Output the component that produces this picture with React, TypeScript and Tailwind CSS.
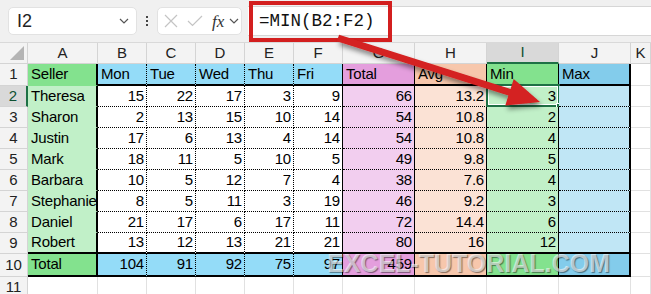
import React from "react";

const widths = ["w-[28px]", "w-[70px]", "w-[49px]", "w-[49px]", "w-[49px]", "w-[49px]", "w-[49px]", "w-[72px]", "w-[72px]", "w-[72px]", "w-[72px]", "w-[20px]"];
const letters = ["A", "B", "C", "D", "E", "F", "G", "H", "I", "J", "K"];

const headerFill = ["bg-[#83e28e]", "bg-[#94dcf8]", "bg-[#94dcf8]", "bg-[#94dcf8]", "bg-[#94dcf8]", "bg-[#94dcf8]", "bg-[#e49edd]", "bg-[#f7c7ac]", "bg-[#83e28e]", "bg-[#83cceb]", "bg-white"];
const dataFill = ["bg-[#c1f0c8]", "bg-white", "bg-white", "bg-white", "bg-white", "bg-white", "bg-[#f2ceef]", "bg-[#fbe2d5]", "bg-[#c1f0c8]", "bg-[#c0e6f5]", "bg-white"];

const rows: (string | number)[][] = [
    ["Seller", "Mon", "Tue", "Wed", "Thu", "Fri", "Total", "Avg", "Min", "Max"],
    ["Theresa", 15, 22, 17, 3, 9, 66, 13.2, 3, ""],
    ["Sharon", 2, 13, 15, 10, 14, 54, 10.8, 2, ""],
    ["Justin", 17, 6, 13, 4, 14, 54, 10.8, 4, ""],
    ["Mark", 18, 11, 5, 10, 5, 49, 9.8, 5, ""],
    ["Barbara", 10, 5, 12, 7, 4, 38, 7.6, 4, ""],
    ["Stephanie", 8, 5, 11, 3, 19, 46, 9.2, 3, ""],
    ["Daniel", 21, 17, 6, 17, 11, 72, 14.4, 6, ""],
    ["Robert", 13, 12, 13, 21, 21, 80, 16, 12, ""],
    ["Total", 104, 91, 92, 75, 97, 459, "", "", ""],
    ["", "", "", "", "", "", "", "", "", ""],
];

const rowHeights = ["h-[22px]", "h-[21px]", "h-[21px]", "h-[21px]", "h-[21px]", "h-[21px]", "h-[21px]", "h-[21px]", "h-[21px]", "h-[23px]", "h-[21px]"];

// r: 1..11, c: 0..10 (A..K)
function rightBorder(r: number, c: number) {
    if (r === 11 || c === 10) return "border-r border-r-[#e1e1e1]";
    if (c === 0 || c === 9) return "border-r-2 border-r-black";
    if (c >= 1 && c <= 4) return "border-r border-r-black [border-right-style:dotted]";
    return "border-r border-r-black";
}

function bottomBorder(r: number, c: number) {
    if (r === 11 || c === 10) return "border-b border-b-[#e1e1e1]";
    if (r === 9 || r === 10) return "border-b-2 border-b-black";
    if (c === 0) return "border-b border-b-transparent";
    if (r === 1) return "border-b-2 border-b-black";
    return "border-b border-b-black [border-bottom-style:dotted]";
}

function fill(r: number, c: number) {
    if (r === 11) return "bg-white";
    if (r === 1 || r === 10) return headerFill[c];
    return dataFill[c];
}

const Chevron = ({ className }: { className?: string }) => (
    <svg width="10" height="6" viewBox="0 0 10 6" className={className}>
        <path d="M1 1L5 5L9 1" stroke="#555" strokeWidth="1.2" fill="none" />
    </svg>
);

export default function App() {
    return (
        <div className="relative w-[651px] h-[294px] overflow-hidden bg-white font-['Liberation_Sans',sans-serif] text-[#111]">
            {/* formula bar */}
            <div className="flex items-center h-[43px] bg-[#f0f0f0] border-b border-[#d9d9d9]">
                <div className="ml-[8px] w-[129px] h-[28px] bg-white rounded-[5px] border border-[#e2e2e2] flex items-center justify-between pl-[8px] pr-[7px]">
                    <span className="text-[18px] text-[#222]">I2</span>
                    <Chevron />
                </div>
                <div className="ml-[9px] flex flex-col gap-[2px]">
                    <span className="w-[2px] h-[2px] bg-[#444]" />
                    <span className="w-[2px] h-[2px] bg-[#444]" />
                    <span className="w-[2px] h-[2px] bg-[#444]" />
                </div>
                <div className="ml-[9px] w-[85px] h-[28px] bg-white rounded-[5px] border border-[#e2e2e2] flex items-center pl-[6px]">
                    <svg width="14" height="14" viewBox="0 0 14 14">
                        <path d="M1 1L13 13M13 1L1 13" stroke="#c4c4c4" strokeWidth="1.2" />
                    </svg>
                    <svg width="16" height="12" viewBox="0 0 16 12" className="ml-[9px]">
                        <path d="M1 6L5.5 10.5L15 1" stroke="#c4c4c4" strokeWidth="1.2" fill="none" />
                    </svg>
                    <span className="ml-[9px] font-['Liberation_Serif',serif] italic text-[17px] text-[#333] leading-none">fx</span>
                    <Chevron className="ml-[5px]" />
                </div>
                <div className="ml-[6px] flex-1 h-[30px] bg-white border-y border-[#d6d6d6] flex items-center pl-[11px]">
                    <span className="font-['Liberation_Mono',monospace] text-[17.5px] text-[#111]">=MIN(B2:F2)</span>
                </div>
            </div>

            {/* column headers */}
            <div className="flex h-[21px]">
                <div className="w-[28px] bg-[#f3f3f3] border-r border-b border-[#d4d4d4] relative">
                    <svg width="14" height="14" viewBox="0 0 14 14" className="absolute right-[3px] bottom-[3px]">
                        <polygon points="14,0 14,14 0,14" fill="#b4b4b4" />
                    </svg>
                </div>
                {letters.map((l, i) => (
                    <div
                        key={l}
                        className={`${widths[i + 1]} flex items-center justify-center text-[15px] border-r border-r-[#d4d4d4] ${i === 8 ? "bg-[#d9d9d9] border-b-2 border-b-[#1e7145] text-[#0f5132]" : "bg-[#f3f3f3] border-b border-b-[#d4d4d4] text-[#222]"}`}
                    >
                        {l}
                    </div>
                ))}
            </div>

            {/* sheet rows */}
            {rows.map((row, ri) => {
                const r = ri + 1;
                return (
                    <div key={r} className={`flex ${rowHeights[ri]}`}>
                        <div
                            className={`w-[28px] flex items-center justify-center text-[15px] border-b border-b-[#d4d4d4] ${r === 2 ? "bg-[#d9d9d9] border-r-2 border-r-[#1e7145] text-[#0f5132]" : "bg-[#f3f3f3] border-r border-r-[#d4d4d4] text-[#222]"}`}
                        >
                            {r}
                        </div>
                        {letters.map((l, c) => {
                            const v = c < 10 ? row[c] : "";
                            const isNum = typeof v === "number";
                            return (
                                <div
                                    key={l}
                                    className={`relative ${widths[c + 1]} ${fill(r, c)} ${rightBorder(r, c)} ${bottomBorder(r, c)} flex items-center text-[15px] tracking-[-0.2px] text-black whitespace-nowrap ${isNum ? "justify-end pr-[2px]" : "pl-[3px]"}`}
                                >
                                    {v}
                                    {r === 2 && c === 8 && (
                                        <div className="absolute -left-[1px] -top-[2px] w-[74px] h-[23px] border-2 border-[#1e7145]">
                                            <div className="absolute inset-0 border border-white" />
                                            <div className="absolute -right-[5px] -bottom-[5px] w-[7px] h-[7px] bg-[#1e7145] border border-white" />
                                        </div>
                                    )}
                                </div>
                            );
                        })}
                    </div>
                );
            })}

            {/* highlight around formula */}
            <div className="absolute left-[249px] top-[1px] w-[143px] h-[41px] border-4 border-[#d31f1f]" />

            {/* arrow */}
            <svg width="651" height="294" className="absolute left-0 top-0 pointer-events-none">
                <defs>
                    <filter id="sh" x="-10%" y="-30%" width="130%" height="180%">
                        <feDropShadow dx="2" dy="4" stdDeviation="2.5" floodColor="#000" floodOpacity="0.45" />
                    </filter>
                </defs>
                <polygon
                    points="339.1,34.7 510.6,89 513.7,79 540,102 505.3,105.6 508.4,95.6 336.9,41.3"
                    fill="#d42020"
                    filter="url(#sh)"
                />
            </svg>

            {/* watermark */}
            <div className="absolute left-[327px] top-[251px] font-['Liberation_Sans',sans-serif] font-bold text-[25px] leading-none text-white/60 [text-shadow:1px_1px_1px_rgba(0,0,0,0.45)] pointer-events-none">
                EXCEL-TUTORIAL.COM
            </div>
        </div>
    );
}
